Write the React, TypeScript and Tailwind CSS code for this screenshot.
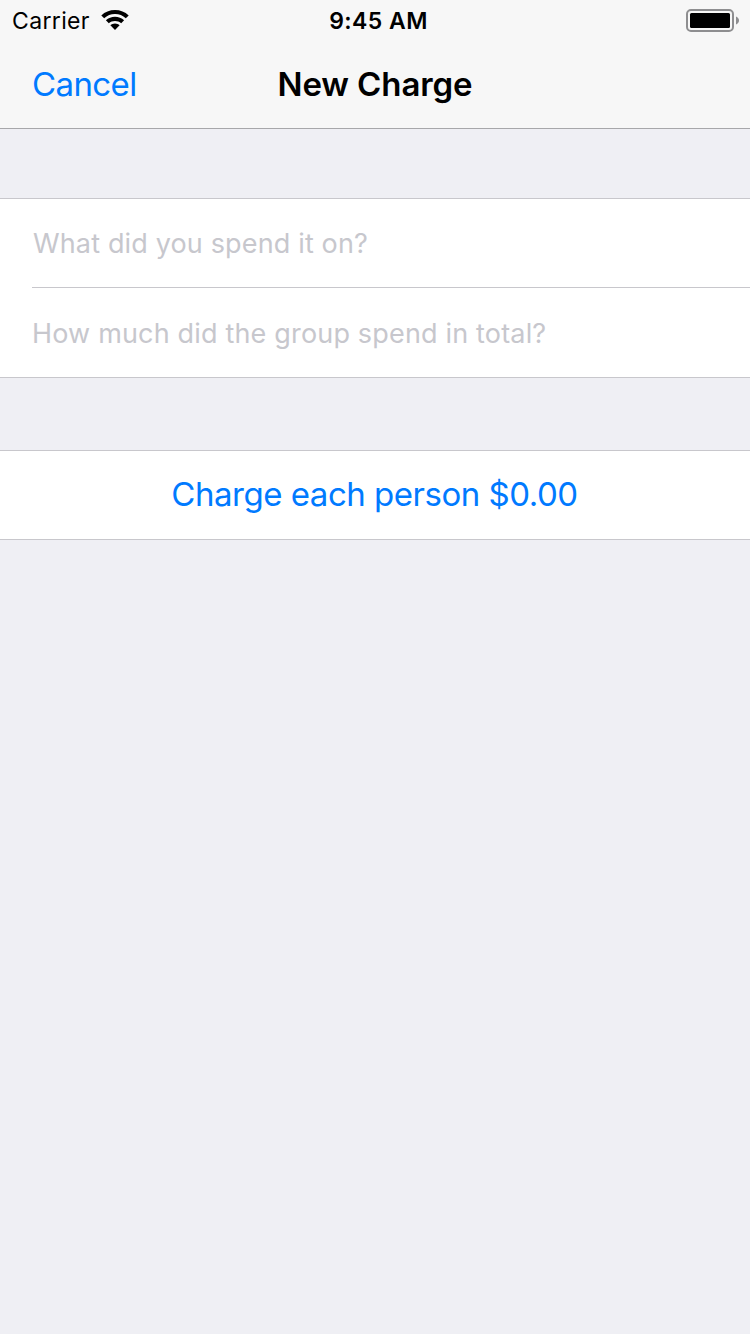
import { useState } from "react";

const GROUP_SIZE = 4;

function WifiIcon() {
  return (
    <svg width="28" height="21" viewBox="0 0 28 21" className="mb-0.5 ml-[11px]">
      <path
        d="M14 0C8.700 0 3.900 2 0.300 5.400L3.200 8.300C6.100 5.600 9.800 4.100 14 4.100S21.900 5.600 24.800 8.300L27.700 5.400C24.100 2 19.300 0 14 0Z"
        fill="#000"
      />
      <path
        d="M14 6.800C10.500 6.800 7.300 8.100 4.900 10.300L7.800 13.200C9.500 11.700 11.600 10.900 14 10.900S18.500 11.700 20.200 13.200L23.100 10.300C20.700 8.100 17.500 6.800 14 6.800Z"
        fill="#000"
      />
      <path d="M14 13.500C12.200 13.500 10.600 14.200 9.400 15.300L14 20L18.600 15.300C17.400 14.200 15.800 13.500 14 13.500Z" fill="#000" />
    </svg>
  );
}

function BatteryIcon() {
  return (
    <svg width="54" height="24" viewBox="0 0 54 24">
      <rect x="1" y="1" width="46" height="21" rx="4" fill="none" stroke="#8e8e90" strokeWidth="2" />
      <rect x="4" y="4" width="40" height="15" rx="1.500" fill="#000" />
      <path d="M50 7.500C52 8.500 53 9.800 53 11.500S52 14.500 50 15.500Z" fill="#8e8e90" />
    </svg>
  );
}

export default function App() {
  const [title, setTitle] = useState("");
  const [total, setTotal] = useState("");

  const share = (Number(total) || 0) / GROUP_SIZE;

  return (
    <div className="flex h-[1334px] w-[750px] flex-col bg-[#efeff4] font-['Inter',sans-serif] text-black">
      <header className="h-[129px] border-b border-[#a7a7aa] bg-[#f7f7f7]">
        <div className="grid h-[42px] grid-cols-3 items-center pr-[10px] pl-3">
          <div className="flex items-center">
            <span className="text-[23px] leading-10 tracking-[0.35px]">Carrier</span>
            <WifiIcon />
          </div>
          <span className="pl-[5px] text-center text-[23px] leading-10 font-semibold tracking-[0.45px]">9:45 AM</span>
          <div className="flex justify-end">
            <BatteryIcon />
          </div>
        </div>
        <div className="grid h-[86px] grid-cols-3 items-center px-8">
          <button type="button" className="justify-self-start text-[33px] tracking-[-0.6px] text-[#007aff]">
            Cancel
          </button>
          <h1 className="text-center text-[33px] font-semibold tracking-[-0.1px] whitespace-nowrap">New Charge</h1>
        </div>
      </header>

      <section className="mt-[69px] border-y border-[#c8c7cc] bg-white pl-8">
        <input
          value={title}
          onChange={(e) => setTitle(e.target.value)}
          placeholder="What did you spend it on?"
          className="block h-[89px] w-full border-b border-[#c8c7cc] pl-px text-[27px] tracking-[0.15px] outline-none placeholder:text-[#c7c7cd]"
        />
        <input
          value={total}
          onChange={(e) => setTotal(e.target.value)}
          placeholder="How much did the group spend in total?"
          className="block h-[89px] w-full pt-0.5 text-[27px] tracking-[0.17px] outline-none placeholder:text-[#c7c7cd]"
        />
      </section>

      <button
        type="button"
        className="mt-[72px] h-[90px] w-full border-y border-[#c8c7cc] bg-white pr-px text-[33px] tracking-[-0.48px] text-[#007aff]"
      >
        Charge each person ${share.toFixed(2)}
      </button>
    </div>
  );
}
